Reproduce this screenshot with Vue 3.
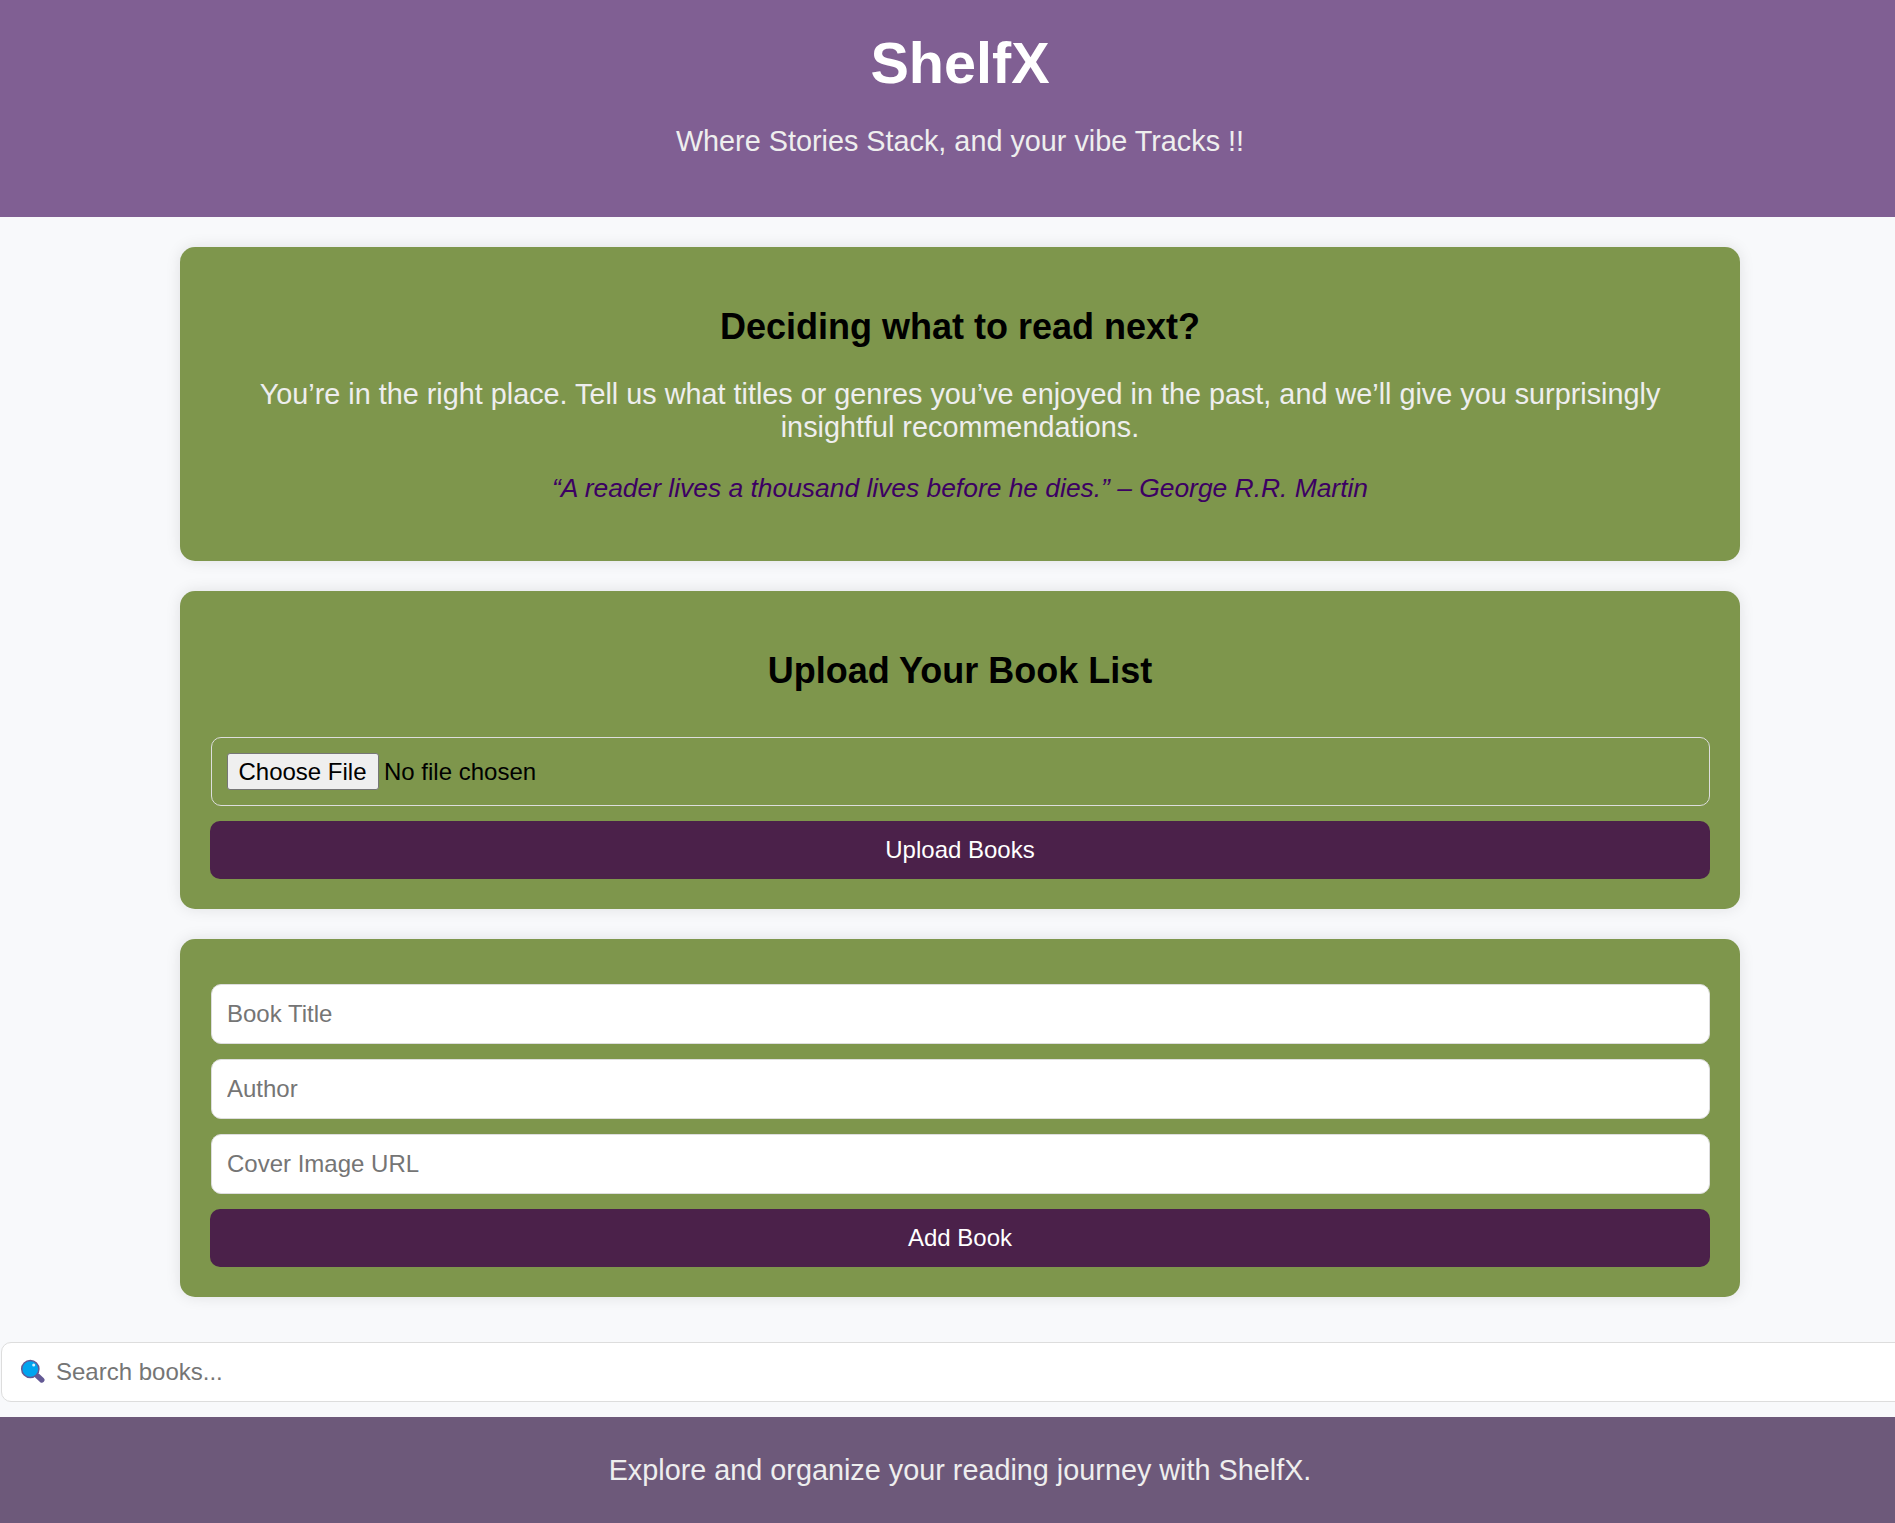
<script setup>
const fields = ['Book Title', 'Author', 'Cover Image URL']
</script>

<template>
  <div class="viewport">
    <div class="page">
      <header class="hero">
        <h1>ShelfX</h1>
        <p>Where Stories Stack, and your vibe Tracks !!</p>
      </header>

      <section class="card intro">
        <h2>Deciding what to read next?</h2>
        <p>You’re in the right place. Tell us what titles or genres you’ve enjoyed in the past, and we’ll give you surprisingly insightful recommendations.</p>
        <p class="quote">“A reader lives a thousand lives before he dies.” – George R.R. Martin</p>
      </section>

      <section class="card upload">
        <h2>Upload Your Book List</h2>
        <div class="file">
          <button type="button" class="choose">Choose File</button>
          <span>No file chosen</span>
        </div>
        <button type="button" class="action">Upload Books</button>
      </section>

      <section class="card add">
        <input v-for="f in fields" :key="f" class="field" type="text" :placeholder="f" />
        <button type="button" class="action">Add Book</button>
      </section>

      <label class="search">
        <svg width="26" height="26" viewBox="0 0 26 26">
          <path d="M17.5 17 L21.8 20.9" stroke="#635994" stroke-width="5.4" stroke-linecap="round" />
          <circle cx="10.3" cy="10" r="8.6" fill="#00a4ef" stroke="#635994" stroke-width="1.5" />
          <circle cx="13.7" cy="6" r="1.5" fill="#d5f1ff" />
        </svg>
        <input type="text" placeholder="Search books..." />
      </label>

      <footer class="foot">Explore and organize your reading journey with ShelfX.</footer>
    </div>
  </div>
</template>

<style>
body {
  margin: 0;
  background: #f8f9fb;
}
</style>

<style scoped>
.viewport {
  width: 100%;
  height: 1523px;
  overflow: hidden;
}
.page {
  width: 1920px;
  height: 1523px;
  display: flex;
  flex-direction: column;
  background: #f8f9fb;
  font-family: "Liberation Sans", Arial, sans-serif;
  font-size: 28.8px;
  line-height: 33px;
  color: #eee;
}
.page * {
  box-sizing: border-box;
}
h1, h2, p {
  margin: 0;
}
.hero {
  height: 217px;
  padding-top: 30px;
  text-align: center;
  background: #805f93;
}
h1 {
  font-size: 57.6px;
  line-height: 66px;
  color: #fff;
}
.hero p {
  margin-top: 29px;
}
.card {
  display: flex;
  flex-direction: column;
  width: 1560px;
  margin: 30px auto 0;
  padding: 0 30px;
  border-radius: 15px;
  background: #7e964c;
  box-shadow: 0 0 15px rgba(0, 0, 0, 0.1);
  text-align: center;
}
h2 {
  margin-top: 59px;
  font-size: 36px;
  line-height: 41px;
  color: #000;
}
.intro {
  height: 314px;
}
.intro p {
  margin-top: 31px;
}
.intro .quote {
  margin-top: 29px;
  font-size: 26.4px;
  line-height: 30px;
  font-style: italic;
  color: #3c0063;
}
.upload {
  height: 318px;
}
.file {
  display: flex;
  align-items: center;
  gap: 5px;
  height: 69px;
  margin: 46px 0 15px 1px;
  padding-left: 15px;
  border: 1px solid #ddd;
  border-radius: 10px;
  font-size: 24px;
  color: #000;
}
.choose {
  width: 152px;
  height: 37px;
  padding: 0 1px 0 0;
  border: 1px solid #767676;
  border-radius: 3px;
  background: #efefef;
  font: 24px "Liberation Sans", Arial, sans-serif;
  color: #000;
}
.action {
  flex: none;
  height: 58px;
  padding: 0;
  border: 0;
  border-radius: 10px;
  background: #4b214a;
  font: 24px "Liberation Sans", Arial, sans-serif;
  color: #fff;
}
.add {
  height: 358px;
  padding-top: 45px;
}
.field {
  height: 60px;
  margin: 0 0 15px 1px;
  padding: 0 15px;
  border: 1px solid #ddd;
  border-radius: 10px;
  background: #fff;
  font: 24px "Liberation Sans", Arial, sans-serif;
}
input::placeholder {
  color: #757575;
}
.search {
  display: flex;
  align-items: center;
  flex: none;
  width: 1918px;
  height: 60px;
  margin: 45px 0 15px 1px;
  padding-left: 18px;
  border: 1px solid #ddd;
  border-radius: 10px;
  background: #fff;
}
.search svg {
  fill: none;
}
.search input {
  flex: 1;
  height: 56px;
  margin-left: 10px;
  padding: 0;
  border: 0;
  background: transparent;
  font: 24px "Liberation Sans", Arial, sans-serif;
}
.foot {
  flex: 1;
  padding-top: 37px;
  text-align: center;
  background: #6d597a;
}
</style>
